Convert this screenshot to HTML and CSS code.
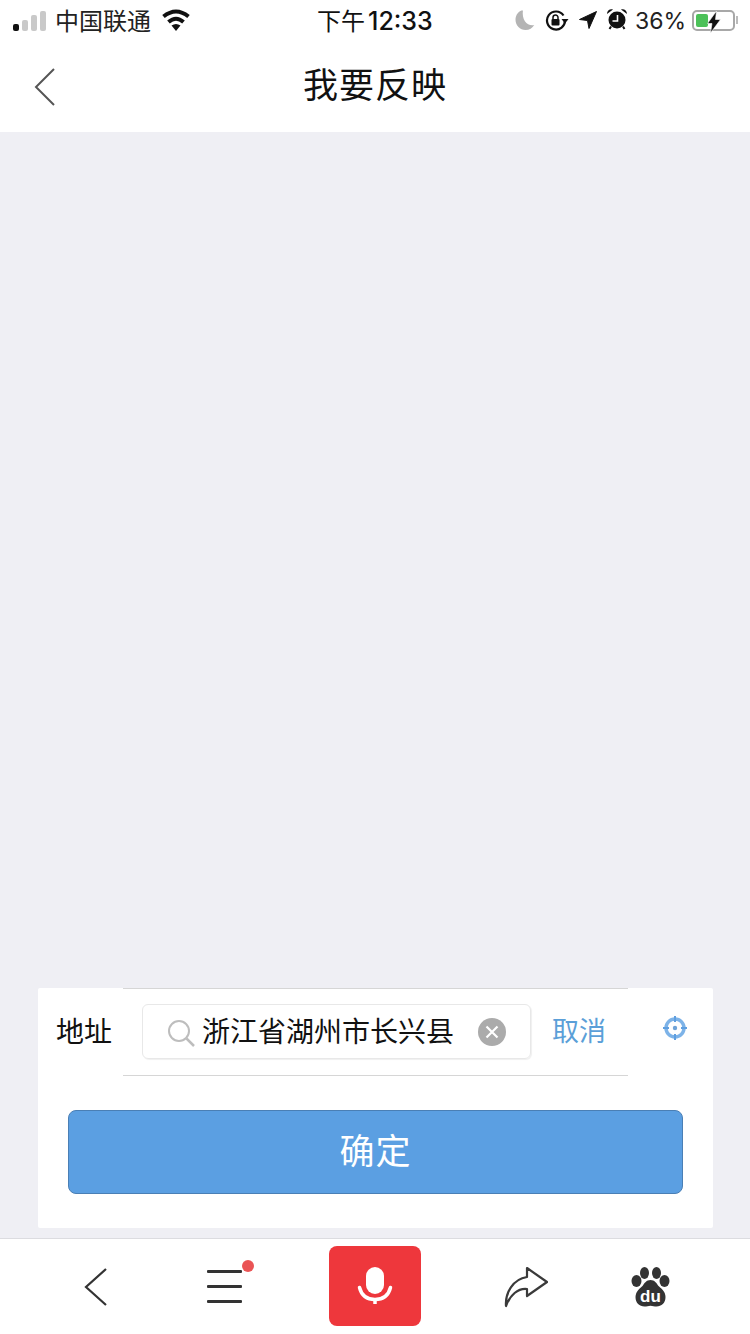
FILE: index.html
```html
<!DOCTYPE html>
<html lang="zh-CN">
<head>
    <meta charset="UTF-8">
    <meta name="viewport" content="width=device-width, initial-scale=1.0">
    <title>我要反映</title>
    <link rel="stylesheet" href="styles.css">
</head>
<body>
    <div class="page">
        <div class="status-bar">
            <div class="status-left">
                <div class="signal">
                    <span class="bar bar-1 on"></span>
                    <span class="bar bar-2"></span>
                    <span class="bar bar-3"></span>
                    <span class="bar bar-4"></span>
                </div>
                <span class="carrier">中国联通</span>
                <svg class="wifi" width="30" height="24" viewBox="0 0 30 24">
                    <path d="M2.500 8.500Q15-1.500 27.500 8.500" fill="none" stroke="#111" stroke-width="4"/>
                    <path d="M7.500 14Q15 7.500 22.500 14" fill="none" stroke="#111" stroke-width="4"/>
                    <path d="M10.500 17.500Q15 14.500 19.500 17.500L15 23z" fill="#111"/>
                </svg>
            </div>
            <div class="status-time">下午<span class="time-digits">12:33</span></div>
            <div class="status-right">
                <svg class="moon" width="22" height="22" viewBox="0 0 22 22">
                    <path d="M9 1C4.500 2 1.500 6 1.500 10.800 1.500 16.500 6 21 11.500 21c3.800 0 7-2 8.800-5-6.500 1.500-13-4.500-11.300-15z" fill="#b4b4b4"/>
                </svg>
                <svg class="lock" width="24" height="22" viewBox="0 0 24 22">
                    <path d="M18.500 6.500A9 9 0 1 0 20 11" fill="none" stroke="#111" stroke-width="2.200"/>
                    <path d="M23.500 10h-7l3.500 4.500z" fill="#111"/>
                    <rect x="6.500" y="10" width="8" height="6.500" rx="1" fill="#111"/>
                    <path d="M8 10V8.500a2.500 2.500 0 0 1 5 0V10" fill="none" stroke="#111" stroke-width="1.500"/>
                </svg>
                <svg class="arrow" width="20" height="20" viewBox="0 0 20 20">
                    <path d="M18.500 1.500L1.500 9.500l8 1 1.500 8z" fill="#111" stroke="#111" stroke-linejoin="round"/>
                </svg>
                <svg class="alarm" width="22" height="22" viewBox="0 0 22 22">
                    <circle cx="11" cy="12" r="8.500" fill="#111"/>
                    <path d="M1 6C1 2.500 4 .5 7 1.500zM21 6c0-3.500-3-5.500-6-4.500z" fill="#111"/>
                    <path d="M11.500 7v6H6.500" fill="none" stroke="#fff" stroke-width="1.600"/>
                    <path d="M5 18.500L3.500 21M17 18.500l1.500 2.500" stroke="#111" stroke-width="2"/>
                </svg>
                <span class="percent">36%</span>
                <div class="battery">
                    <div class="battery-body">
                        <div class="battery-level"></div>
                        <svg class="bolt" width="14" height="22" viewBox="0 0 14 22">
                            <path d="M9.500 0L.5 12.500h4.500L3.500 22l10-13.500H8.500z" fill="#111" stroke="#fff" stroke-width=".6"/>
                        </svg>
                    </div>
                    <span class="battery-cap"></span>
                </div>
            </div>
        </div>

        <div class="header">
            <svg class="header-back" width="24" height="40" viewBox="0 0 24 40">
                <path d="M21 2L3 20l18 18" fill="none" stroke="#555" stroke-width="2"/>
            </svg>
            <h1>我要反映</h1>
        </div>

        <div class="content">
            <div class="panel">
                <div class="address-row">
                    <span class="line line-top"></span>
                    <span class="line line-bottom"></span>
                    <span class="label">地址</span>
                    <div class="search-box">
                        <svg class="search-icon" width="28" height="28" viewBox="0 0 28 28">
                            <circle cx="12" cy="12" r="10" fill="none" stroke="#bdbdbd" stroke-width="2"/>
                            <path d="M19.500 19.500L27 27" stroke="#bdbdbd" stroke-width="2.500"/>
                        </svg>
                        <span class="search-text">浙江省湖州市长兴县</span>
                        <span class="clear-btn">
                            <svg width="14" height="14" viewBox="0 0 14 14">
                                <path d="M1.500 1.500l11 11M12.500 1.500l-11 11" stroke="#fff" stroke-width="2.200"/>
                            </svg>
                        </span>
                    </div>
                    <span class="cancel">取消</span>
                    <svg class="locate" width="26" height="26" viewBox="0 0 26 26">
                        <circle cx="13" cy="13" r="9" fill="none" stroke="#7db3e8" stroke-width="3.500"/>
                        <circle cx="13" cy="13" r="2.200" fill="#6fa3d8"/>
                        <path d="M13 1v6M13 19v6M1 13h6M19 13h6" stroke="#5f9fe0" stroke-width="2"/>
                    </svg>
                </div>
                <div class="button-row">
                    <button class="confirm">确定</button>
                </div>
            </div>
        </div>

        <div class="toolbar">
            <svg class="tool-back" width="24" height="40" viewBox="0 0 24 40">
                <path d="M22 2L2 20l20 18" fill="none" stroke="#333" stroke-width="2.200"/>
            </svg>
            <div class="menu">
                <span class="menu-line"></span>
                <span class="menu-line"></span>
                <span class="menu-line"></span>
                <span class="menu-dot"></span>
            </div>
            <div class="mic-btn">
                <svg width="36" height="40" viewBox="0 0 36 40">
                    <rect x="9" y="1" width="18" height="27" rx="9" fill="#fff"/>
                    <path d="M2.500 21.500c2 8 8 12 15.500 12s13.500-4 15.500-12" fill="none" stroke="#fff" stroke-width="3.500" stroke-linecap="round"/>
                    <path d="M18 33v5" stroke="#fff" stroke-width="3.500"/>
                </svg>
            </div>
            <svg class="share" width="44" height="42" viewBox="0 0 44 42">
                <path d="M2 40C1 27 9 13 23 11V2l20 14-20 14v-7C14 22 6 29 2 40z" fill="none" stroke="#3a3a3a" stroke-width="2.200" stroke-linejoin="round"/>
            </svg>
            <div class="paw">
                <svg width="40" height="40" viewBox="0 0 40 40">
                    <ellipse cx="5.500" cy="14" rx="5" ry="6" fill="#333"/>
                    <ellipse cx="13.500" cy="6" rx="4.500" ry="6" fill="#333"/>
                    <ellipse cx="25.500" cy="6" rx="4.500" ry="6" fill="#333"/>
                    <ellipse cx="33.500" cy="14" rx="5" ry="6" fill="#333"/>
                    <path d="M19.500 13c-4 0-6 3-8 6-2 2-7 5-7 11 0 6 4 9.500 9 9.500 2 0 4-.8 6-.8s4 .8 6 .8c5 0 9-3.500 9-9.500 0-6-5-9-7-11-2-3-4-6-8-6z" fill="#333"/>
                </svg>
                <span class="paw-text">du</span>
            </div>
        </div>
    </div>
</body>
</html>
```

FILE: styles.css
```css
html, body {
    margin: 0;
    padding: 0;
}

body {
    font-family: "Noto Sans CJK SC", "Liberation Sans", sans-serif;
    background-color: #ffffff;
    color: #111;
}

.page {
    width: 750px;
    height: 1334px;
    display: flex;
    flex-direction: column;
    overflow: hidden;
}

/* status bar */
.status-bar {
    height: 40px;
    display: flex;
    align-items: center;
    justify-content: space-between;
    position: relative;
    flex-shrink: 0;
}

.status-left {
    display: flex;
    align-items: center;
    padding-left: 13px;
}

.signal {
    display: flex;
    align-items: flex-end;
    gap: 3px;
    height: 22px;
    margin-right: 9px;
}

.bar {
    width: 6px;
    background-color: #c9c9c9;
    border-radius: 2px;
}

.bar.on {
    background-color: #111;
}

.bar-1 { height: 7px; }
.bar-2 { height: 11px; }
.bar-3 { height: 16px; }
.bar-4 { height: 20px; }

.carrier {
    font-size: 24px;
    line-height: 40px;
    margin-right: 10px;
    color: #222;
}

.wifi {
    margin-top: -1px;
}

.status-time {
    position: absolute;
    left: 317px;
    top: 0;
    font-size: 24px;
    line-height: 40px;
    color: #111;
    white-space: nowrap;
}

.time-digits {
    font-family: Inter, "Liberation Sans", sans-serif;
    font-size: 25px;
    font-weight: 500;
    margin-left: 3px;
}

.status-right {
    display: flex;
    align-items: center;
    padding-right: 12px;
}

.moon { margin-right: 9px; }
.lock { margin-right: 9px; }
.arrow { margin-right: 8px; }
.alarm { margin-right: 7px; margin-top: -2px; }

.percent {
    font-family: Inter, "Liberation Sans", sans-serif;
    font-size: 23px;
    line-height: 40px;
    color: #222;
    margin-right: 6px;
    margin-top: 1px;
}

.battery {
    display: flex;
    align-items: center;
}

.battery-body {
    width: 43px;
    height: 21px;
    box-sizing: border-box;
    border: 2px solid #a8a8a8;
    border-radius: 5px;
    padding: 2px;
    display: flex;
    position: relative;
}

.battery-level {
    width: 12px;
    background-color: #4cc159;
    border-radius: 2px;
}

.bolt {
    position: absolute;
    left: 13px;
    top: -1px;
}

.battery-cap {
    width: 2px;
    height: 8px;
    margin-left: 1px;
    background-color: #bbb;
}

/* header */
.header {
    height: 92px;
    display: flex;
    align-items: center;
    justify-content: center;
    position: relative;
    flex-shrink: 0;
}

.header h1 {
    margin: 0 0 8px;
    font-size: 35px;
    font-weight: 400;
    color: #111;
    letter-spacing: 1px;
}

.header-back {
    position: absolute;
    left: 33px;
    top: 27px;
}

/* grey area + panel */
.content {
    flex: 1;
    background-color: #efeff4;
    display: flex;
    flex-direction: column;
    justify-content: flex-end;
    padding: 0 37px 10px 38px;
}

.panel {
    background-color: #ffffff;
    height: 240px;
    border-radius: 2px;
}

.address-row {
    height: 88px;
    display: flex;
    align-items: center;
    position: relative;
    padding-bottom: 2px;
    box-sizing: border-box;
}

.line {
    position: absolute;
    left: 85px;
    width: 505px;
    height: 1px;
    background-color: #d6d6d6;
}

.line-top { top: 0; }
.line-bottom { top: 87px; }

.label {
    font-size: 28px;
    line-height: 40px;
    margin-left: 18px;
    width: 86px;
    flex-shrink: 0;
    color: #111;
    margin-top: -3px;
}

.search-box {
    width: 389px;
    height: 55px;
    box-sizing: border-box;
    border: 1px solid #e8e8e8;
    border-radius: 6px;
    box-shadow: 1px 1px 1px #f0f0f0;
    display: flex;
    align-items: center;
    padding-left: 24px;
    margin-top: 1px;
}

.search-icon {
    margin-right: 7px;
    flex-shrink: 0;
    margin-top: 2px;
}

.search-text {
    font-size: 28px;
    line-height: 40px;
    white-space: nowrap;
    color: #111;
    margin-top: -3px;
}

.clear-btn {
    width: 28px;
    height: 28px;
    margin-left: 24px;
    border-radius: 50%;
    background-color: #ababab;
    display: flex;
    align-items: center;
    justify-content: center;
    flex-shrink: 0;
}

.cancel {
    font-size: 27px;
    line-height: 40px;
    margin-left: 21px;
    color: #5b9fd8;
    white-space: nowrap;
    margin-top: -3px;
}

.locate {
    margin-left: 56px;
    margin-top: -6px;
}

.button-row {
    padding: 34px 30px 0 30px;
}

.confirm {
    display: block;
    width: 100%;
    height: 84px;
    padding: 0 0 8px;
    font-family: inherit;
    font-size: 35px;
    color: #ffffff;
    background-color: #5b9fe2;
    border: 1px solid #4a7fb5;
    border-radius: 8px;
    letter-spacing: 1px;
}

/* bottom toolbar */
.toolbar {
    height: 96px;
    box-sizing: border-box;
    border-top: 1px solid #dcdce0;
    background-color: #ffffff;
    display: flex;
    align-items: center;
    position: relative;
    flex-shrink: 0;
    padding-left: 84px;
}

.tool-back {
    flex-shrink: 0;
    margin-right: 99px;
}

.menu {
    width: 35px;
    display: flex;
    flex-direction: column;
    gap: 12px;
    position: relative;
    margin-right: 87px;
}

.menu-line {
    height: 3px;
    background-color: #333;
    border-radius: 1px;
}

.menu-dot {
    position: absolute;
    right: -12px;
    top: -10px;
    width: 12px;
    height: 12px;
    border-radius: 50%;
    background-color: #ea5455;
}

.mic-btn {
    width: 92px;
    height: 80px;
    background-color: #ee373c;
    border-radius: 8px;
    display: flex;
    align-items: center;
    justify-content: center;
    margin-right: 83px;
    margin-top: -1px;
}

.share {
    flex-shrink: 0;
    margin-right: 83px;
}

.paw {
    width: 40px;
    height: 40px;
    position: relative;
}

.paw-text {
    position: absolute;
    left: 0;
    right: 1px;
    top: 22px;
    text-align: center;
    font-family: "Liberation Sans", sans-serif;
    font-size: 17px;
    line-height: 16px;
    font-weight: 700;
    color: #ffffff;
}
```
